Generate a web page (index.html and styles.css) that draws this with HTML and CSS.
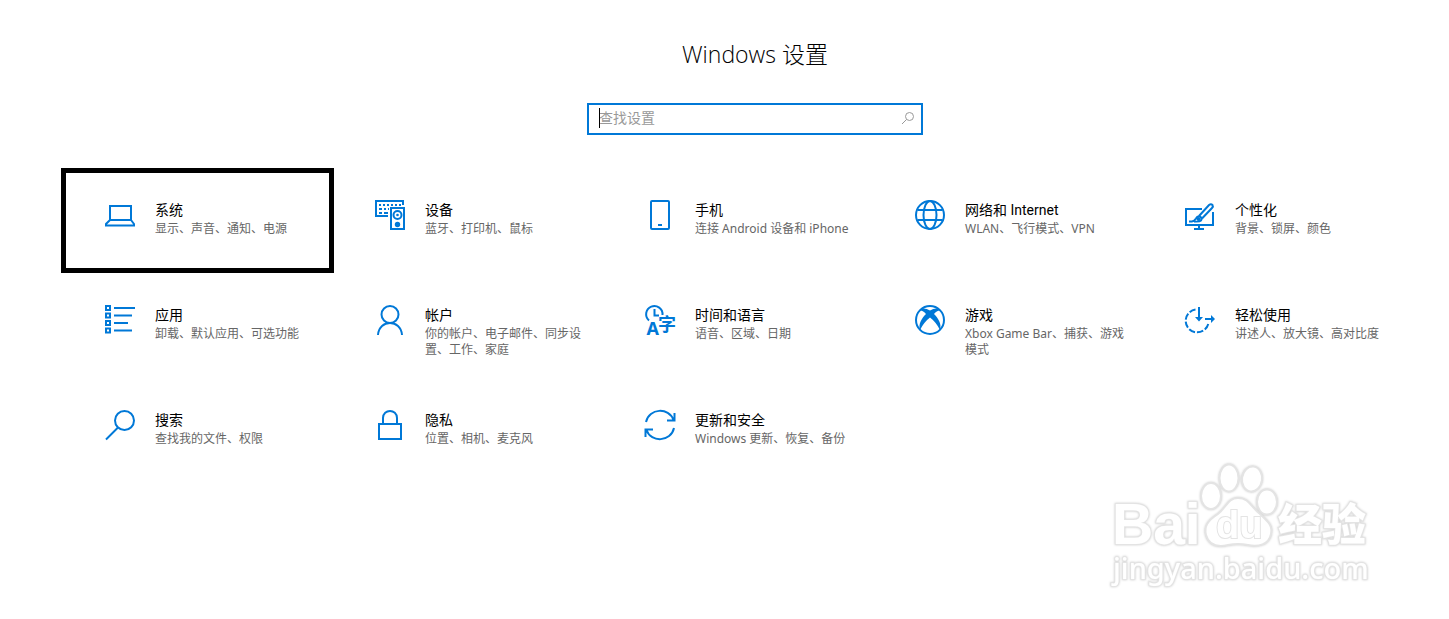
FILE: index.html
```html
<!doctype html>
<html lang="zh-CN">
	<head>
		<meta charset="utf-8"/>
		<meta name="viewport" content="width=device-width, initial-scale=1"/>
		<title>Windows 设置</title>
		<link rel="stylesheet" href="styles.css">
	</head>

	<body>
		<main class="settings">
			<h1>Windows 设置</h1>

			<form class="search">
				<input type="text" placeholder="查找设置" aria-label="查找设置"/>
				<span class="caret"></span>
				<button type="submit" aria-label="搜索">
					<svg width="14" height="14" viewBox="0 0 14 14"><circle cx="8.5" cy="5.5" r="4"/><path d="M5.5 8.5L1 13"/></svg>
				</button>
			</form>

			<nav class="cards">
				<a class="card selected" href="#">
					<svg class="icon" viewBox="0 0 30 30"><path d="M5 6H26V20H5ZM5 20L1 24V25.500H29V24L26 20"/></svg>
					<div class="text">
						<h2>系统</h2>
						<p>显示、声音、通知、电源</p>
					</div>
				</a>
				<a class="card" href="#">
					<svg class="icon" viewBox="0 0 30 30">
						<path d="M13 16H1V1H28V5"/>
						<path d="M4 5H26" stroke-dasharray="2 2"/>
						<path d="M4 9H7M9 9H11M13 9H14M4 13H7M9 13H13"/>
						<path d="M16 8H29V29H16Z"/>
						<circle cx="22.500" cy="15" r="4"/>
						<circle class="solid" cx="22.500" cy="15" r="1.300"/>
						<circle class="solid" cx="22.500" cy="24.500" r="2.700"/>
					</svg>
					<div class="text">
						<h2>设备</h2>
						<p>蓝牙、打印机、鼠标</p>
					</div>
				</a>
				<a class="card" href="#">
					<svg class="icon" viewBox="0 0 30 30"><rect x="6" y="1" width="18" height="28" rx="1"/><path d="M13 25H17"/></svg>
					<div class="text">
						<h2>手机</h2>
						<p>连接 Android 设备和 iPhone</p>
					</div>
				</a>
				<a class="card" href="#">
					<svg class="icon" viewBox="0 0 30 30"><circle cx="15" cy="15" r="14"/><ellipse cx="15" cy="15" rx="6.500" ry="14"/><path d="M2.500 10H27.500M2.500 20H27.500"/></svg>
					<div class="text">
						<h2>网络和 Internet</h2>
						<p>WLAN、飞行模式、VPN</p>
					</div>
				</a>
				<a class="card" href="#">
					<svg class="icon" viewBox="0 0 30 30">
						<path d="M17 9H1V25H28V12M14 25V29M9 29H19"/>
						<path d="M14 16L24 5Q26 3.500 27.500 5Q28.500 6.500 27 8L17 18.500"/>
						<path d="M4 21.500H7Q9.500 21 11 18.500Q12.500 15.500 15 16.500Q17.500 18 16 20.500Q14.500 22 9 21.500"/>
						<circle class="solid" cx="13.500" cy="19" r="2"/>
					</svg>
					<div class="text">
						<h2>个性化</h2>
						<p>背景、锁屏、颜色</p>
					</div>
				</a>
				<a class="card" href="#">
					<svg class="icon" viewBox="0 0 30 30"><path d="M1 1H5V5H1ZM1 8.500H5V12.500H1ZM1 16H5V20H1ZM1 23.500H5V27.500H1ZM9 3H30M9 10.500H27M9 18H23M9 25.500H27"/></svg>
					<div class="text">
						<h2>应用</h2>
						<p>卸载、默认应用、可选功能</p>
					</div>
				</a>
				<a class="card" href="#">
					<svg class="icon" viewBox="0 0 30 30"><circle cx="15" cy="9.500" r="8.500"/><path d="M3 30C4 14 26 14 27 30"/></svg>
					<div class="text">
						<h2>帐户</h2>
						<p>你的帐户、电子邮件、同步设置、工作、家庭</p>
					</div>
				</a>
				<a class="card" href="#">
					<svg class="icon" viewBox="0 0 30 30">
						<path d="M4 15.500A8.200 8.200 0 1 1 17.500 10M9.500 4V10.500H14"/>
						<text x="1.500" y="30" font-size="18">A</text>
						<text x="13" y="26" font-size="18">字</text>
					</svg>
					<div class="text">
						<h2>时间和语言</h2>
						<p>语音、区域、日期</p>
					</div>
				</a>
				<a class="card" href="#">
					<svg class="icon" viewBox="0 0 30 30">
						<circle cx="15" cy="15" r="14"/>
						<path class="solid" d="M6 4Q10 2.500 15 5.500Q20 2.500 24 4L25.500 5.500Q22 5 19 9C23 13 27 19 25 25Q21 17 15 12.500Q9 17 5 25C3 19 7 13 11 9Q8 5 4.500 5.500Z"/>
					</svg>
					<div class="text">
						<h2>游戏</h2>
						<p>Xbox Game Bar、捕获、游戏模式</p>
					</div>
				</a>
				<a class="card" href="#">
					<svg class="icon" viewBox="0 0 30 30">
						<path d="M10.500 4.500A11.500 11.500 0 1 0 23.500 18" stroke-dasharray="6.500 2"/>
						<path d="M14 2V15M20 14H28"/>
						<path class="solid" d="M10 12H18L14 16.500ZM26 10V18L30 14Z"/>
					</svg>
					<div class="text">
						<h2>轻松使用</h2>
						<p>讲述人、放大镜、高对比度</p>
					</div>
				</a>
				<a class="card" href="#">
					<svg class="icon" viewBox="0 0 30 30"><circle cx="19.500" cy="10.500" r="9.500"/><path d="M13 17.500L1 29.500"/></svg>
					<div class="text">
						<h2>搜索</h2>
						<p>查找我的文件、权限</p>
					</div>
				</a>
				<a class="card" href="#">
					<svg class="icon" viewBox="0 0 30 30"><path d="M4 14H26V29H4ZM8 14V8C8-1.500 22-1.500 22 8V14"/></svg>
					<div class="text">
						<h2>隐私</h2>
						<p>位置、相机、麦克风</p>
					</div>
				</a>
				<a class="card" href="#">
					<svg class="icon" viewBox="0 0 30 30"><path d="M1 12C4-2 24-3 28.500 10M29.500 3V10.500H22M29 18C26 32 6 33 1.500 20M.5 27V19.500H8"/></svg>
					<div class="text">
						<h2>更新和安全</h2>
						<p>Windows 更新、恢复、备份</p>
					</div>
				</a>
			</nav>
		</main>

		<svg class="watermark" width="280" height="140" viewBox="0 0 280 140">
			<ellipse cx="111" cy="41" rx="10" ry="13"/>
			<ellipse cx="129" cy="23" rx="9.500" ry="13.500"/>
			<ellipse cx="152" cy="24" rx="10" ry="12.500" transform="rotate(8 152 24)"/>
			<ellipse cx="167" cy="47" rx="10" ry="12.500"/>
			<path d="M138 43C128 43 126 53 118 59C107 66 104 72 106 80C109 91 119 92 128 90Q138 88 148 90C158 92 169 90 171 79C173 70 167 66 160 59C151 52 149 43 138 43Z"/>
			<text class="latin" x="12" y="89" font-size="57">Bai</text>
			<text class="du" x="116" y="83" font-size="38">du</text>
			<text class="cjk" x="178" y="86" font-size="44">经验</text>
			<text class="site" x="13" y="124" font-size="29">jingyan.baidu.com</text>
		</svg>
	</body>
</html>
```
FILE: styles.css
```css
*, *::before {
	box-sizing: border-box;
}

body {
	margin: 0;
	background-color: #fff;
	color: #000;
	font-family: "Noto Sans", "Noto Sans CJK SC", sans-serif;
}

h1, h2, p {
	margin: 0;
	font-weight: normal;
}

.settings {
	display: flex;
	flex-direction: column;
	align-items: center;
	padding: 36px 0 40px 61px;
}

h1 {
	font-family: "Open Sans", "Noto Sans CJK SC", sans-serif;
	font-size: 23px;
	font-weight: 300;
	line-height: 36px;
}

.search {
	position: relative;
	display: flex;
	align-items: center;
	width: 336px;
	max-width: 100%;
	height: 32px;
	margin-top: 31px;
	padding: 0 6px 2px 10px;
	border: 2px solid #0078d7;
}

.search input {
	flex: 1;
	min-width: 0;
	padding: 0;
	border: 0;
	outline: 0;
	background: none;
	font-family: inherit;
	font-size: 14px;
	line-height: 20px;
}

.search input::placeholder {
	color: #999;
	opacity: 1;
}

.search button {
	display: flex;
	padding: 0;
	border: 0;
	background: none;
}

.search button svg {
	fill: none;
	stroke: #999;
}

.caret {
	position: absolute;
	top: 3px;
	left: 10px;
	width: 1px;
	height: 20px;
	background-color: #000;
}

.cards {
	display: grid;
	grid-template-columns: repeat(auto-fill, 270px);
	grid-auto-rows: minmax(105px, auto);
	justify-content: center;
	width: 100%;
	margin-top: 40px;
}

.card {
	position: relative;
	display: flex;
	gap: 20px;
	padding: 25px 30px 0 25px;
	color: inherit;
	text-decoration: none;
}

/* frame drawn round the chosen category */
.selected::before {
	content: "";
	position: absolute;
	top: -7px;
	left: -19px;
	width: 273px;
	height: 105px;
	border: 5px solid #000;
}

.icon {
	flex: none;
	width: 30px;
	height: 30px;
	overflow: visible;
	fill: none;
	stroke: #0078d7;
	stroke-width: 2;
}

.icon .solid {
	fill: #0078d7;
	stroke: none;
}

.icon text {
	fill: #0078d7;
	stroke: none;
	font-weight: bold;
}

.text {
	flex: 1;
}

.card h2 {
	font-family: Roboto, "Noto Sans CJK SC", sans-serif;
	font-size: 14px;
	line-height: 20px;
}

.card p {
	margin-top: 1px;
	color: #666;
	font-size: 12px;
	line-height: 16px;
}

.watermark {
	position: fixed;
	right: 69px;
	bottom: 24px;
	fill: #fff;
	stroke: #e4e4e4;
	stroke-width: 2;
	filter: drop-shadow(0 0 1px #ccc);
	pointer-events: none;
}

.watermark text {
	paint-order: stroke;
}

.latin, .du {
	font-family: "Liberation Sans", Arial, sans-serif;
	font-weight: bold;
}

.cjk {
	font-weight: 900;
}

.site {
	font-weight: 500;
}
```
